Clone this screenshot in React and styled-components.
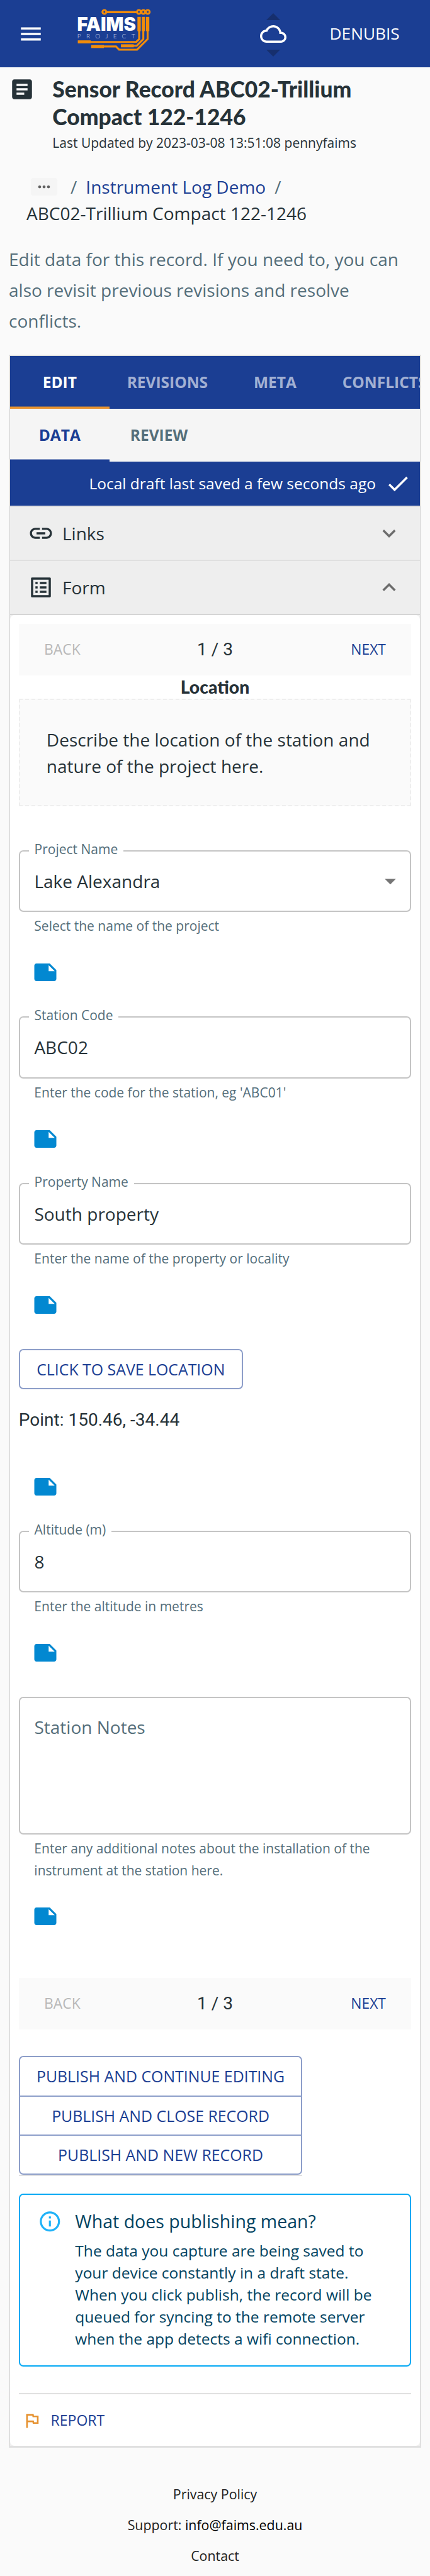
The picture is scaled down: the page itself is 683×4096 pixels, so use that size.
import React from "react";
import styled, { createGlobalStyle, css } from "styled-components";

// The design grid is 390 units wide and is drawn across a 683px viewport.
const u = (n) => `${((n * 683) / 390).toFixed(3)}px`;

const color = {
  primary: "#1b3e93",
  accent: "#e69332",
  ink: "#263238",
  muted: "#546e7a",
  line: "#e0e0e0",
  page: "#fafafa",
  outline: "#8d9ec9",
};

const GlobalStyle = createGlobalStyle`
  *, *::before, *::after { box-sizing: border-box; }
  body {
    margin: 0;
    background: ${color.page};
    color: ${color.ink};
    font-family: "Open Sans", "Noto Sans", sans-serif;
    font-size: ${u(16)};
    line-height: ${u(24)};
    overflow: hidden;
  }
  button { border: 0; background: none; padding: 0; margin: 0; color: inherit; font: inherit; }
  p, h1, h2 { margin: 0; }
  a { text-decoration: none; }
`;

const Svg = styled.svg`
  display: block;
  flex: none;
  width: ${(p) => u(p.$size)};
  height: ${(p) => u(p.$size)};
  fill: ${(p) => p.$color || "currentColor"};
`;
const paths = {
  menu: "M3 18h18v-2H3v2zm0-5h18v-2H3v2zm0-7v2h18V6H3z",
  cloud:
    "M19.35 10.04C18.67 6.59 15.64 4 12 4 9.11 4 6.6 5.64 5.35 8.04 2.34 8.36 0 10.91 0 14c0 3.31 2.69 6 6 6h13c2.76 0 5-2.24 5-5 0-2.64-2.05-4.78-4.65-4.96zM19 18H6c-2.21 0-4-1.79-4-4s1.79-4 4-4h.71C7.37 7.69 9.48 6 12 6c3.04 0 5.5 2.46 5.5 5.5v.5H19c1.66 0 3 1.34 3 3s-1.34 3-3 3z",
  article:
    "M19 3H5c-1.1 0-2 .9-2 2v14c0 1.1.9 2 2 2h14c1.1 0 2-.9 2-2V5c0-1.1-.9-2-2-2zm-5 14H7v-2h7v2zm3-4H7v-2h10v2zm0-4H7V7h10v2z",
  more: "M6 10c-1.1 0-2 .9-2 2s.9 2 2 2 2-.9 2-2-.9-2-2-2zm12 0c-1.1 0-2 .9-2 2s.9 2 2 2 2-.9 2-2-.9-2-2-2zm-6 0c-1.1 0-2 .9-2 2s.9 2 2 2 2-.9 2-2-.9-2-2-2z",
  check: "M9 16.17 4.83 12l-1.42 1.41L9 19 21 7l-1.41-1.41z",
  link: "M3.9 12c0-1.71 1.39-3.1 3.1-3.1h4V7H7c-2.76 0-5 2.24-5 5s2.24 5 5 5h4v-1.9H7c-1.71 0-3.1-1.39-3.1-3.1zM8 13h8v-2H8v2zm9-6h-4v1.9h4c1.71 0 3.1 1.39 3.1 3.1s-1.39 3.1-3.1 3.1h-4V17h4c2.76 0 5-2.24 5-5s-2.24-5-5-5z",
  list: "M19 5v14H5V5h14m1.1-2H3.9c-.5 0-.9.4-.9.9v16.2c0 .4.4.9.9.9h16.2c.4 0 .9-.5.9-.9V3.9c0-.5-.5-.9-.9-.9zM11 7h6v2h-6V7zm0 4h6v2h-6v-2zm0 4h6v2h-6zM7 7h2v2H7zm0 4h2v2H7zm0 4h2v2H7z",
  down: "M16.59 8.59 12 13.17 7.41 8.59 6 10l6 6 6-6z",
  up: "m12 8-6 6 1.41 1.41L12 10.83l4.59 4.58L18 14z",
  drop: "m7 10 5 5 5-5z",
  note: "M22 10l-6-6H4c-1.1 0-2 .9-2 2v12.01c0 1.1.9 1.99 2 1.99l16-.01c1.1 0 2-.89 2-2v-8zm-7-4.5l5.5 5.5H15V5.5z",
  info: "M11,9H13V7H11M12,20C7.59,20 4,16.41 4,12C4,7.59 7.59,4 12,4C16.41,4 20,7.59 20,12C20,16.41 16.41,20 12,20M12,2A10,10 0 0,0 2,12A10,10 0 0,0 12,22A10,10 0 0,0 22,12A10,10 0 0,0 12,2M11,17H13V11H11V17Z",
  flag: "m12.36 6 .08.39.32 1.61H18v6h-3.36l-.32-1.61-.08-.39H7V6h5.36M14 4H5v17h2v-7h5.6l.4 2h7V6h-5.6L14 4z",
};
const Icon = ({ name, size = 24, color: c }) => (
  <Svg viewBox="0 0 24 24" $size={size} $color={c} aria-hidden="true">
    <path d={paths[name]} />
  </Svg>
);

/* ---------- app bar ---------- */
const AppBar = styled.header`
  display: flex;
  align-items: flex-start;
  height: ${u(61)};
  background: ${color.primary};
  color: #fff;
  padding: 0 ${u(26.6)} 0 ${u(16)};
`;
const MenuButton = styled.button`
  margin-top: ${u(19)};
`;
const LogoSvg = styled.svg`
  display: block;
  width: ${u(67.78)};
  height: ${u(39.44)};
  margin: ${u(7.22)} auto 0 ${u(29.44)};
`;
const Sync = styled.div`
  display: flex;
  flex-direction: column;
  align-items: center;
  padding-top: ${u(12)};
  margin-right: ${u(38)};
`;
const Arrow = styled.span`
  width: 0;
  height: 0;
  border: solid transparent;
  border-width: 0 ${u(6.65)};
  ${(p) =>
    p.$down
      ? css`border-top: ${u(6.65)} solid #162f6e;`
      : css`border-bottom: ${u(6.65)} solid #162f6e;`}
`;
const CloudSlot = styled.span`
  padding: ${u(0.4)} 0 ${u(2.3)};
`;
const UserButton = styled.button`
  width: ${u(65.4)};
  font-size: ${u(15)};
  height: ${u(24)};
  line-height: ${u(24)};
  margin-top: ${u(18.4)};
  white-space: nowrap;
`;

const Logo = () => (
  <LogoSvg viewBox="85 65 610 355" role="img" aria-label="FAIMS Project">
    <g fill="none" stroke="#f28c0a" strokeWidth="16">
      <circle cx="310" cy="96" r="15.5" />
      <circle cx="592" cy="96" r="15.5" />
      <circle cx="628" cy="96" r="15.5" />
      <circle cx="664" cy="96" r="15.5" />
      <path d="M325 96.500H577" strokeWidth="18" />
      <path d="M594 250V318L570 341H190" />
      <path d="M628 250V317L574 372H545" />
      <path d="M663 250V317L577 404H430L405 378H300" />
    </g>
    <g fill="#f28c0a">
      <rect x="580" y="136" width="27" height="117" />
      <rect x="615" y="136" width="27" height="117" />
      <rect x="650" y="136" width="27" height="117" />
      <rect x="93" y="328" width="105" height="25" />
      <rect x="445" y="360" width="105" height="25" />
      <rect x="202" y="366" width="104" height="25" />
    </g>
    <text x="87" y="250" fill="#fff" fontFamily="Inter, sans-serif" fontWeight="900" fontSize="154" textLength="481" lengthAdjust="spacingAndGlyphs">
      FAIMS
    </text>
    <text x="89" y="312" fill="#cfd7ec" fontFamily="Lato, sans-serif" fontWeight="300" fontSize="52" textLength="472">
      PROJECT
    </text>
  </LogoSvg>
);

/* ---------- record heading ---------- */
const Heading = styled.section`
  display: flex;
  padding: ${u(7.4)} ${u(8)} 0;
`;
const HeadingIcon = styled.div`
  width: ${u(39.6)};
  padding-top: ${u(0.6)};
`;
const Title = styled.h1`
  font: 900 ${u(20.2)} / ${u(25.2)} Lato, sans-serif;
`;
const Updated = styled.p`
  font-size: ${u(12)};
  line-height: ${u(20)};
  margin-top: ${u(1.4)};
`;
const Crumbs = styled.nav`
  display: flex;
  flex-wrap: wrap;
  align-items: center;
  padding: 0 ${u(24)};
  margin-top: ${u(17.6)};
`;
const Chip = styled.button`
  display: flex;
  align-items: center;
  justify-content: center;
  width: ${u(24)};
  height: ${u(16)};
  margin: 0 ${u(4)};
  border-radius: ${u(2)};
  background: #f5f5f5;
  color: #606060;
`;
const Slash = styled.span`
  color: ${color.muted};
  margin: 0 ${u(8)};
`;
const CrumbLink = styled.a`
  color: ${color.primary};
`;
const Lead = styled.p`
  margin: ${u(15.9)} ${u(8)} ${u(16.3)};
  line-height: ${u(28)};
  color: ${color.muted};
`;

/* ---------- panel ---------- */
const Panel = styled.main`
  margin: 0 ${u(8)};
  border: 2px solid ${color.line};
  border-bottom-width: 3px;
  background: ${color.line};
`;
const Tabs = styled.div`
  display: flex;
  height: ${u(48)};
  overflow: hidden;
  background: ${(p) => (p.$light ? "#f5f5f5" : color.primary)};
  color: ${(p) => (p.$light ? color.muted : "rgba(255,255,255,.6)")};
`;
const Tab = styled.button`
  flex: none;
  min-width: ${u(90)};
  padding: 0 ${u(16)};
  font-size: ${u(14)};
  font-weight: 700;
  ${(p) =>
    p.$active &&
    css`
      color: ${p.$active};
      box-shadow: inset 0 -${u(2)} ${p.$bar};
    `}
`;
const DraftBar = styled.div`
  display: flex;
  align-items: center;
  justify-content: flex-end;
  gap: ${u(8)};
  height: ${u(40)};
  padding-right: ${u(8)};
  background: ${color.primary};
  color: #fff;
  font-size: ${u(14)};
`;
const Accordion = styled.div`
  display: flex;
  align-items: center;
  gap: ${u(7.6)};
  height: ${u(49)};
  padding: 0 ${u(16)} 0 ${u(15.8)};
  border-top: 2px solid #dfdfdf;
  background: #eee;
`;
const Chevron = styled.span`
  margin-left: auto;
  color: #6c6c6c;
`;
const Sheet = styled.section`
  padding: ${u(8)} ${u(7.9)} 0;
  border-radius: ${u(4)};
  background: #fff;
`;
const SheetBack = styled.div`
  border-top: 2px solid #d5d5d5;
  background: #eee;
`;

const Stepper = styled.div`
  display: grid;
  grid-template-columns: 1fr auto 1fr;
  align-items: center;
  height: ${u(46.9)};
  margin-top: ${(p) => u(p.$gap || 0)};
  padding: 0 ${u(23)};
  background: ${color.page};
`;
const StepCount = styled.span`
  font-family: Roboto, sans-serif;
`;
const StepButton = styled.button`
  font-size: ${u(13.05)};
  justify-self: ${(p) => p.$side};
  color: ${(p) => (p.$off ? "#b8b8b8" : color.primary)};
`;
const Section = styled.h2`
  font: 900 ${u(16.2)} / ${u(21)} Lato, sans-serif;
  text-align: center;
`;
const Intro = styled.div`
  height: ${u(98)};
  margin-bottom: ${u(40)};
  padding: ${u(24)} ${u(24)} 0;
  border: 2px dashed #eee;
  background: ${color.page};
`;

/* ---------- form fields ---------- */
const Outline = styled.div`
  position: relative;
  display: flex;
  align-items: ${(p) => (p.$tall ? "flex-start" : "center")};
  justify-content: space-between;
  height: ${(p) => u(p.$tall ? 125 : 56)};
  padding: ${(p) => (p.$tall ? u(14) : 0)} ${u(6)} 0 ${u(12.9)};
  border: 2px solid #c4c4c4;
  border-radius: ${u(4)};
  color: ${(p) => (p.$tall ? color.muted : color.ink)};
`;
const Label = styled.label`
  position: absolute;
  left: ${u(8)};
  top: ${u(-12)};
  padding: 0 ${u(5)};
  background: #fff;
  color: ${color.muted};
  font-size: ${u(12)};
  line-height: ${u(20)};
`;
const Helper = styled.p`
  margin: ${u(3)} ${u(14)} 0;
  font-size: ${u(12)};
  line-height: ${u(19.92)};
  color: ${color.muted};
`;
const NoteButton = styled.button`
  display: block;
  margin: ${(p) => u(p.$gap)} 0 ${u(28)} ${u(12)};
`;
const Note = ({ gap = 20 }) => (
  <NoteButton $gap={gap} aria-label="Add note">
    <Icon name="note" color="#0288d1" />
  </NoteButton>
);
const Field = ({ label, value, helper, select }) => (
  <div>
    <Outline>
      <Label>{label}</Label>
      {value}
      {select && <Icon name="drop" color="#757575" />}
    </Outline>
    <Helper>{helper}</Helper>
    <Note />
  </div>
);

const OutlinedButton = styled.button`
  display: block;
  height: ${u(36.75)};
  width: ${u(203.2)};
  border: 2px solid ${color.outline};
  border-radius: ${u(4)};
  color: ${color.primary};
  font-size: ${u(14.2)};
  white-space: nowrap;
`;
const Point = styled.p`
  margin: ${u(16)} 0 ${u(36.2)};
  font-family: Roboto, sans-serif;
`;
const PublishWrap = styled.div`
  width: fit-content;
  margin: ${u(24.2)} 0 ${u(16)};
  border-bottom: 2px solid ${color.line};
`;
const PublishGroup = styled.div`
  display: flex;
  flex-direction: column;
  width: ${u(257.2)};
  height: ${u(108)};
  border: 2px solid ${color.outline};
  border-radius: ${u(4)};
`;
const PublishButton = styled.button`
  flex: 1;
  font-size: ${u(14.2)};
  white-space: nowrap;
  color: ${color.primary};
  & + & {
    border-top: 2px solid ${color.outline};
  }
`;
const Alert = styled.div`
  display: flex;
  gap: ${u(12)};
  height: ${u(157)};
  padding: ${u(11.8)} ${u(16)} 0;
  border: 2px solid #03a9f4;
  border-radius: ${u(4)};
  color: #014361;
  font-size: ${u(14)};
  line-height: ${u(20)};
`;
const AlertIcon = styled.span`
  padding-top: ${u(1.2)};
`;
const AlertTitle = styled.p`
  font-size: ${u(16.3)};
  line-height: ${u(24)};
  margin-bottom: ${u(4.4)};
`;
const Report = styled.div`
  display: flex;
  align-items: center;
  gap: ${u(8)};
  height: ${u(48)};
  margin-top: ${u(24)};
  padding-left: ${u(3)};
  border-top: 2px solid ${color.line};
  font-size: ${u(13.15)};
  color: ${color.primary};
`;

const Footer = styled.footer`
  padding-top: ${u(27.8)};
  text-align: center;
  font-size: ${u(12.2)};
  line-height: ${u(28)};
  color: #212121;
`;
const Mail = styled.a`
  color: #000;
`;

const Steps = ({ gap }) => (
  <Stepper $gap={gap}>
    <StepButton $side="start" $off>BACK</StepButton>
    <StepCount>1 / 3</StepCount>
    <StepButton $side="end">NEXT</StepButton>
  </Stepper>
);

export default function App() {
  return (
    <>
      <GlobalStyle />
      <AppBar>
        <MenuButton aria-label="Menu"><Icon name="menu" /></MenuButton>
        <Logo />
        <Sync>
          <Arrow />
          <CloudSlot><Icon name="cloud" /></CloudSlot>
          <Arrow $down />
        </Sync>
        <UserButton>DENUBIS</UserButton>
      </AppBar>

      <Heading>
        <HeadingIcon><Icon name="article" /></HeadingIcon>
        <div>
          <Title>Sensor Record ABC02-Trillium<br />Compact 122-1246</Title>
          <Updated>Last Updated by 2023-03-08 13:51:08 pennyfaims</Updated>
        </div>
      </Heading>
      <Crumbs>
        <Chip aria-label="Show path"><Icon name="more" size={16} /></Chip>
        <Slash>/</Slash>
        <CrumbLink>Instrument Log Demo</CrumbLink>
        <Slash>/</Slash>
        <span>ABC02-Trillium Compact 122-1246</span>
      </Crumbs>
      <Lead>Edit data for this record. If you need to, you can also revisit previous revisions and resolve conflicts.</Lead>

      <Panel>
        <Tabs>
          <Tab $active="#fff" $bar={color.accent}>EDIT</Tab>
          <Tab>REVISIONS</Tab>
          <Tab>META</Tab>
          <Tab>CONFLICTS</Tab>
        </Tabs>
        <Tabs $light>
          <Tab $active={color.primary} $bar={color.primary}>DATA</Tab>
          <Tab>REVIEW</Tab>
        </Tabs>
        <DraftBar>
          Local draft last saved a few seconds ago
          <Icon name="check" />
        </DraftBar>
        <Accordion>
          <Icon name="link" />
          Links
          <Chevron><Icon name="down" /></Chevron>
        </Accordion>
        <Accordion>
          <Icon name="list" />
          Form
          <Chevron><Icon name="up" /></Chevron>
        </Accordion>
        <SheetBack>
          <Sheet>
            <Steps />
            <Section>Location</Section>
            <Intro>Describe the location of the station and nature of the project here.</Intro>
            <Field label="Project Name" value="Lake Alexandra" helper="Select the name of the project" select />
            <Field label="Station Code" value="ABC02" helper="Enter the code for the station, eg 'ABC01'" />
            <Field label="Property Name" value="South property" helper="Enter the name of the property or locality" />
            <OutlinedButton>CLICK TO SAVE LOCATION</OutlinedButton>
            <Point>Point: 150.46, -34.44</Point>
            <Note gap={0} />
            <Field label="Altitude (m)" value="8" helper="Enter the altitude in metres" />
            <Outline $tall>Station Notes</Outline>
            <Helper>Enter any additional notes about the installation of the instrument at the station here.</Helper>
            <Note gap={19.3} />
            <Steps gap={43.9} />
            <PublishWrap>
              <PublishGroup>
                <PublishButton>PUBLISH AND CONTINUE EDITING</PublishButton>
                <PublishButton>PUBLISH AND CLOSE RECORD</PublishButton>
                <PublishButton>PUBLISH AND NEW RECORD</PublishButton>
              </PublishGroup>
            </PublishWrap>
            <Alert>
              <AlertIcon><Icon name="info" size={22} color="#1fb2f8" /></AlertIcon>
              <div>
                <AlertTitle>What does publishing mean?</AlertTitle>
                The data you capture are being saved to your device constantly in a draft state. When you click publish, the record will be queued for syncing to the remote server when the app detects a wifi connection.
              </div>
            </Alert>
            <Report>
              <Icon name="flag" size={18} color={color.accent} />
              REPORT
            </Report>
          </Sheet>
        </SheetBack>
      </Panel>

      <Footer>
        <div>Privacy Policy</div>
        <div>Support: <Mail>info@faims.edu.au</Mail></div>
        <div>Contact</div>
      </Footer>
    </>
  );
}
